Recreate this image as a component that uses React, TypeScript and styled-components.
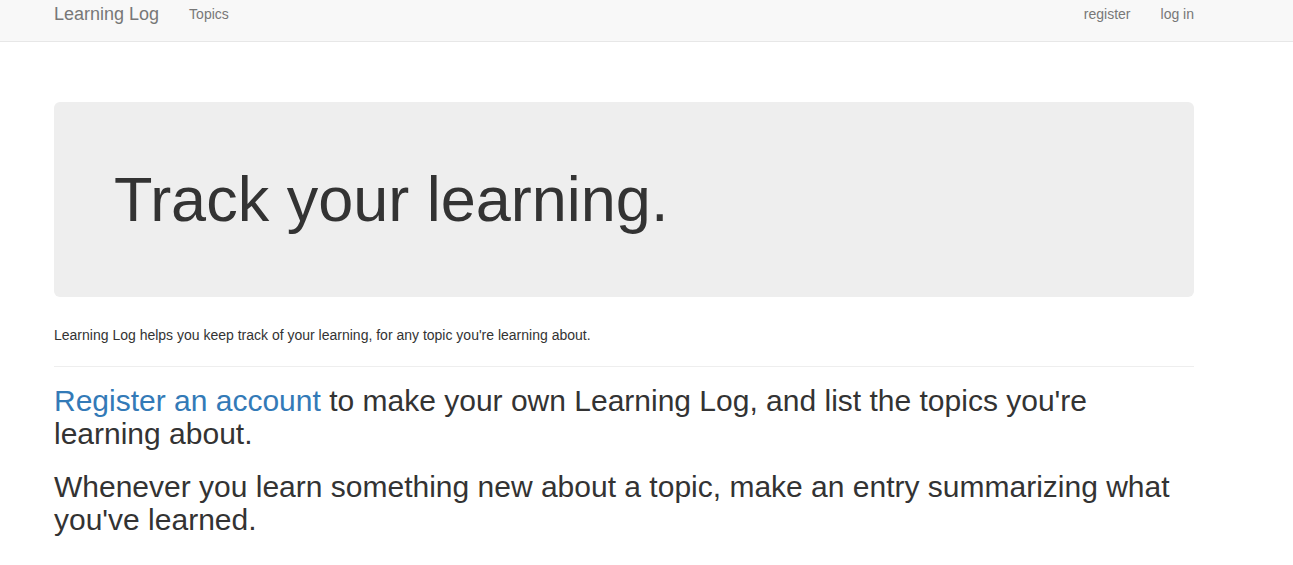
import React from "react";
import styled, { createGlobalStyle } from "styled-components";

const Global = createGlobalStyle`
  html, body { margin: 0; padding: 0; background: #fff; }
  body {
    font-family: "Liberation Sans", Arial, Helvetica, sans-serif;
    font-size: 14px;
    line-height: 1.42857;
    color: #333;
  }
  * { box-sizing: border-box; }
`;

const Navbar = styled.nav`
  height: 42px;
  background: #f8f8f8;
  border-bottom: 1px solid #e7e7e7;
`;

const NavInner = styled.div`
  width: 1170px;
  margin-left: 39px;
  padding: 0 15px;
  display: flex;
  align-items: flex-start;
`;

const Brand = styled.a`
  font-size: 18px;
  line-height: 20px;
  color: #777;
  text-decoration: none;
  padding: 4px 15px 0 0;
`;

const NavList = styled.ul<{ $right?: boolean }>`
  list-style: none;
  margin: 0 ${(p) => (p.$right ? "-15px" : "0")} 0 ${(p) => (p.$right ? "auto" : "0")};
  padding: 0;
  display: flex;
`;

const NavLink = styled.a`
  display: block;
  font-size: 14px;
  line-height: 20px;
  color: #777;
  text-decoration: none;
  padding: 4px 15px 0;
`;

const Container = styled.main`
  width: 1170px;
  margin-left: 39px;
  padding: 60px 15px 0;
`;

const Jumbotron = styled.div`
  background: #eee;
  border-radius: 6px;
  padding: 48px 60px;
  margin-bottom: 29px;
`;

const Title = styled.h1`
  font-size: 63px;
  line-height: 1.1;
  font-weight: 500;
  margin: 15px 0 15px;
  color: #333;
`;

const Intro = styled.p`
  margin: 0;
  font-size: 14px;
  line-height: 18px;
`;

const Rule = styled.hr`
  border: 0;
  border-top: 1px solid #eee;
  margin: 22px 0 17px;
`;

const Heading = styled.h2`
  font-size: 30px;
  line-height: 1.1;
  font-weight: 500;
  margin: 0 0 20px;
  color: #333;
`;

const Link = styled.a`
  color: #337ab7;
  text-decoration: none;
`;

export default function App() {
  return (
    <>
      <Global />
      <Navbar>
        <NavInner>
          <Brand href="#">Learning Log</Brand>
          <NavList>
            <li>
              <NavLink href="#">Topics</NavLink>
            </li>
          </NavList>
          <NavList $right>
            <li>
              <NavLink href="#">register</NavLink>
            </li>
            <li>
              <NavLink href="#">log in</NavLink>
            </li>
          </NavList>
        </NavInner>
      </Navbar>
      <Container>
        <Jumbotron>
          <Title>Track your learning.</Title>
        </Jumbotron>
        <Intro>
          Learning Log helps you keep track of your learning, for any topic you're learning about.
        </Intro>
        <Rule />
        <Heading>
          <Link href="#">Register an account</Link> to make your own Learning Log, and list the topics you're learning about.
        </Heading>
        <Heading>
          Whenever you learn something new about a topic, make an entry summarizing what you've learned.
        </Heading>
      </Container>
    </>
  );
}
